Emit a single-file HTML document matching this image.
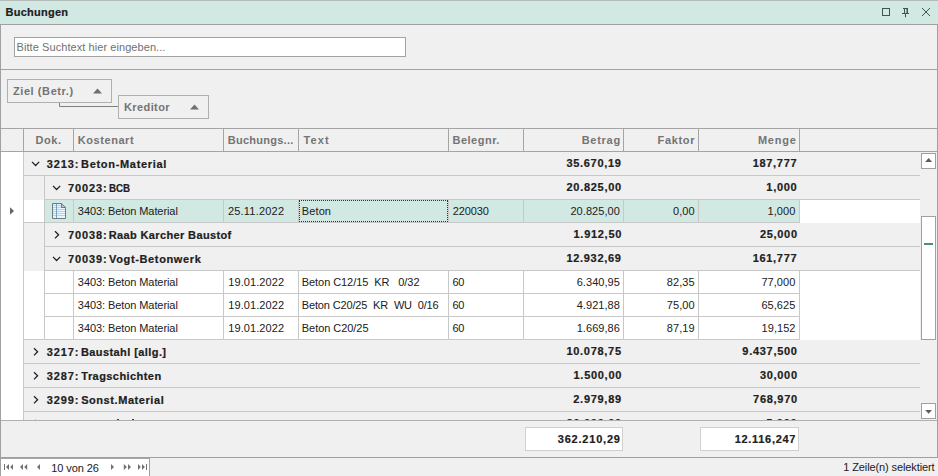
<!DOCTYPE html>
<html>
<head>
<meta charset="utf-8">
<title>Buchungen</title>
<style>
html,body{margin:0;padding:0;}
body{width:938px;height:476px;overflow:hidden;background:#f0f0f0;font-family:"Liberation Sans",sans-serif;font-size:11px;color:#202020;position:relative;}
div{position:absolute;box-sizing:border-box;white-space:nowrap;}
.t{line-height:14px;height:14px;letter-spacing:0.1px;}
.b{font-weight:bold;-webkit-text-stroke:0.2px #202020;}
.r{text-align:right;}
.hd{color:#747474;font-weight:bold;}
.g{color:#707070;}
svg{position:absolute;overflow:visible;}
</style>
</head>
<body>

<div style="left:0px;top:0px;width:938px;height:24px;background:#d2e8e2;"></div>
<div style="left:0px;top:0px;width:938px;height:1px;background:#b4bcba;"></div>
<div style="left:0px;top:24px;width:938px;height:1px;background:#a0a0a0;"></div>
<svg style="left:0;top:0" width="938" height="25">
 <rect x="882.5" y="8.5" width="7" height="7" fill="none" stroke="#45524f" stroke-width="1"/>
 <path d="M903 8.500H908M904.500 8.500V13M902 13.500H909M905.500 14V17.300" fill="none" stroke="#45524f" stroke-width="1"/><path d="M907.200 8.500V13" fill="none" stroke="#45524f" stroke-width="1.500"/>
 <path d="M922 8L930 16M930 8L922 16" fill="none" stroke="#45524f" stroke-width="1"/>
</svg>
<div style="left:0px;top:25px;width:1px;height:451px;background:#a0a0a0;"></div>
<div style="left:937px;top:25px;width:1px;height:433px;background:#a0a0a0;"></div>
<div style="left:14px;top:37px;width:392px;height:20px;background:#fff;border:1px solid #a2a2a2;"></div>
<div style="left:1px;top:69px;width:936px;height:1px;background:#a2a2a2;"></div>
<div style="left:7px;top:79px;width:105px;height:24px;background:transparent;border:1px solid #b0b0b0;"></div>
<div style="left:118px;top:95px;width:91px;height:24px;background:transparent;border:1px solid #b0b0b0;"></div>
<svg style="left:0;top:70px" width="300" height="58">
 <path d="M59.5 33V36.5H118" fill="none" stroke="#808080" stroke-width="1"/>
 <path d="M93 23.5L97.5 18.5L102 23.5Z" fill="#707070"/>
 <path d="M190 39.5L194.5 34.5L199 39.5Z" fill="#707070"/>
</svg>
<div style="left:1px;top:128px;width:936px;height:1px;background:#a4a4a4;"></div>
<div style="left:1px;top:151px;width:936px;height:1px;background:#a4a4a4;"></div>
<div style="left:23px;top:129px;width:1px;height:22px;background:#a4a4a4;"></div>
<div style="left:73px;top:129px;width:1px;height:22px;background:#a4a4a4;"></div>
<div style="left:223px;top:129px;width:1px;height:22px;background:#a4a4a4;"></div>
<div style="left:298px;top:129px;width:1px;height:22px;background:#a4a4a4;"></div>
<div style="left:448px;top:129px;width:1px;height:22px;background:#a4a4a4;"></div>
<div style="left:523px;top:129px;width:1px;height:22px;background:#a4a4a4;"></div>
<div style="left:623px;top:129px;width:1px;height:22px;background:#a4a4a4;"></div>
<div style="left:698px;top:129px;width:1px;height:22px;background:#a4a4a4;"></div>
<div style="left:799px;top:129px;width:1px;height:22px;background:#a4a4a4;"></div>
<div style="left:1px;top:152px;width:22px;height:268px;background:#fff;"></div>
<div style="left:23px;top:152px;width:1px;height:268px;background:#c8c8c8;"></div>
<div style="left:24px;top:175px;width:896px;height:1px;background:#c8c8c8;"></div>
<svg style="left:0;top:0" width="938" height="476"><path d="M32.0 161.9L35.6 165.5L39.2 161.9" fill="none" stroke="#222222" stroke-width="1.3"/></svg>
<div style="left:44px;top:176px;width:1px;height:24px;background:#c8c8c8;"></div>
<div style="left:45px;top:199px;width:875px;height:1px;background:#c8c8c8;"></div>
<svg style="left:0;top:0" width="938" height="476"><path d="M53.0 185.9L56.6 189.5L60.2 185.9" fill="none" stroke="#222222" stroke-width="1.3"/></svg>
<div style="left:24px;top:200px;width:896px;height:23px;background:#fff;"></div>
<div style="left:44px;top:200px;width:1px;height:23px;background:#c8c8c8;"></div>
<div style="left:45px;top:200px;width:754px;height:22px;background:#d2e8e2;"></div>
<div style="left:24px;top:222px;width:776px;height:1px;background:#c8c8c8;"></div>
<div style="left:73px;top:200px;width:1px;height:23px;background:#c8c8c8;"></div>
<div style="left:223px;top:200px;width:1px;height:23px;background:#c8c8c8;"></div>
<div style="left:298px;top:200px;width:1px;height:23px;background:#c8c8c8;"></div>
<div style="left:448px;top:200px;width:1px;height:23px;background:#c8c8c8;"></div>
<div style="left:523px;top:200px;width:1px;height:23px;background:#c8c8c8;"></div>
<div style="left:623px;top:200px;width:1px;height:23px;background:#c8c8c8;"></div>
<div style="left:698px;top:200px;width:1px;height:23px;background:#c8c8c8;"></div>
<div style="left:799px;top:200px;width:1px;height:23px;background:#c8c8c8;"></div>
<div style="left:44px;top:223px;width:1px;height:24px;background:#c8c8c8;"></div>
<div style="left:45px;top:246px;width:875px;height:1px;background:#c8c8c8;"></div>
<svg style="left:0;top:0" width="938" height="476"><path d="M55.0 231.20000000000002L58.6 234.8L55.0 238.4" fill="none" stroke="#222222" stroke-width="1.3"/></svg>
<div style="left:44px;top:247px;width:1px;height:24px;background:#c8c8c8;"></div>
<div style="left:45px;top:270px;width:875px;height:1px;background:#c8c8c8;"></div>
<svg style="left:0;top:0" width="938" height="476"><path d="M53.0 256.90000000000003L56.6 260.5L60.2 256.90000000000003" fill="none" stroke="#222222" stroke-width="1.3"/></svg>
<div style="left:24px;top:271px;width:896px;height:23px;background:#fff;"></div>
<div style="left:44px;top:271px;width:1px;height:23px;background:#c8c8c8;"></div>
<div style="left:45px;top:293px;width:755px;height:1px;background:#c8c8c8;"></div>
<div style="left:73px;top:271px;width:1px;height:23px;background:#c8c8c8;"></div>
<div style="left:223px;top:271px;width:1px;height:23px;background:#c8c8c8;"></div>
<div style="left:298px;top:271px;width:1px;height:23px;background:#c8c8c8;"></div>
<div style="left:448px;top:271px;width:1px;height:23px;background:#c8c8c8;"></div>
<div style="left:523px;top:271px;width:1px;height:23px;background:#c8c8c8;"></div>
<div style="left:623px;top:271px;width:1px;height:23px;background:#c8c8c8;"></div>
<div style="left:698px;top:271px;width:1px;height:23px;background:#c8c8c8;"></div>
<div style="left:799px;top:271px;width:1px;height:23px;background:#c8c8c8;"></div>
<div style="left:24px;top:294px;width:896px;height:23px;background:#fff;"></div>
<div style="left:44px;top:294px;width:1px;height:23px;background:#c8c8c8;"></div>
<div style="left:45px;top:316px;width:755px;height:1px;background:#c8c8c8;"></div>
<div style="left:73px;top:294px;width:1px;height:23px;background:#c8c8c8;"></div>
<div style="left:223px;top:294px;width:1px;height:23px;background:#c8c8c8;"></div>
<div style="left:298px;top:294px;width:1px;height:23px;background:#c8c8c8;"></div>
<div style="left:448px;top:294px;width:1px;height:23px;background:#c8c8c8;"></div>
<div style="left:523px;top:294px;width:1px;height:23px;background:#c8c8c8;"></div>
<div style="left:623px;top:294px;width:1px;height:23px;background:#c8c8c8;"></div>
<div style="left:698px;top:294px;width:1px;height:23px;background:#c8c8c8;"></div>
<div style="left:799px;top:294px;width:1px;height:23px;background:#c8c8c8;"></div>
<div style="left:24px;top:317px;width:896px;height:23px;background:#fff;"></div>
<div style="left:44px;top:317px;width:1px;height:23px;background:#c8c8c8;"></div>
<div style="left:24px;top:339px;width:776px;height:1px;background:#c8c8c8;"></div>
<div style="left:73px;top:317px;width:1px;height:23px;background:#c8c8c8;"></div>
<div style="left:223px;top:317px;width:1px;height:23px;background:#c8c8c8;"></div>
<div style="left:298px;top:317px;width:1px;height:23px;background:#c8c8c8;"></div>
<div style="left:448px;top:317px;width:1px;height:23px;background:#c8c8c8;"></div>
<div style="left:523px;top:317px;width:1px;height:23px;background:#c8c8c8;"></div>
<div style="left:623px;top:317px;width:1px;height:23px;background:#c8c8c8;"></div>
<div style="left:698px;top:317px;width:1px;height:23px;background:#c8c8c8;"></div>
<div style="left:799px;top:317px;width:1px;height:23px;background:#c8c8c8;"></div>
<div style="left:24px;top:363px;width:896px;height:1px;background:#c8c8c8;"></div>
<svg style="left:0;top:0" width="938" height="476"><path d="M34.0 348.2L37.6 351.8L34.0 355.40000000000003" fill="none" stroke="#222222" stroke-width="1.3"/></svg>
<div style="left:24px;top:387px;width:896px;height:1px;background:#c8c8c8;"></div>
<svg style="left:0;top:0" width="938" height="476"><path d="M34.0 372.2L37.6 375.8L34.0 379.40000000000003" fill="none" stroke="#222222" stroke-width="1.3"/></svg>
<div style="left:24px;top:411px;width:896px;height:1px;background:#c8c8c8;"></div>
<svg style="left:0;top:0" width="938" height="476"><path d="M34.0 396.2L37.6 399.8L34.0 403.40000000000003" fill="none" stroke="#222222" stroke-width="1.3"/></svg>
<div style="left:24px;top:412px;width:896px;height:8px;overflow:hidden;">
<div class="t b" style="left:542.59px;top:4px;letter-spacing:0.71px;">80.000,00</div>
<div class="t b" style="left:742.24px;top:4px;letter-spacing:0.71px;">5,000</div>
</div>
<div style="left:116.5px;top:419px;width:2px;height:1px;background:#3a3a3a;"></div>
<div style="left:132px;top:419px;width:2px;height:1px;background:#3a3a3a;"></div>
<div style="left:35px;top:419px;width:1px;height:1px;background:#c0c0c0;"></div>
<div style="left:299px;top:200px;width:149px;height:22px;border:1px dotted #303030;"></div>
<svg style="left:0;top:0" width="938" height="476">
 <path d="M10 207.200L14 211L10 214.800Z" fill="#666666"/>
 <path d="M52.5 203.5H61.5L65.5 207.5V218.5H52.5Z" fill="#eaf4fc" stroke="#6f7b7d" stroke-width="1"/>
 <path d="M53 207H65V208H53ZM53 209H65V210H53ZM53 211H65V212H53ZM53 213H65V214H53ZM53 215H65V216H53ZM53 205H61V206H53Z" fill="#b0d5f3"/>
 <rect x="56" y="204" width="1" height="14" fill="#6fa3d3"/>
 <path d="M61.5 203.5V207.5H65.5Z" fill="#c4ced2" stroke="#6f7b7d" stroke-width="1" stroke-linejoin="round"/>
</svg>
<div style="left:921px;top:153px;width:15px;height:16px;background:#fff;border:1px solid #a0a0a0;"></div>
<div style="left:921px;top:216px;width:15px;height:124px;background:#fff;border:1px solid #a0a0a0;"></div>
<div style="left:921px;top:403px;width:15px;height:16px;background:#fff;border:1px solid #a0a0a0;"></div>
<div style="left:924px;top:243px;width:9px;height:2px;background:#4f8f63;"></div>
<svg style="left:0;top:0" width="938" height="476">
 <path d="M925.1 161.9L928.6 158L932.1 161.9Z" fill="#5c5c5c"/>
 <path d="M925.2 410.1L928.6 413.8L932 410.1Z" fill="#5c5c5c"/>
</svg>
<div style="left:1px;top:420px;width:936px;height:38px;background:#f0f0f0;"></div>
<div style="left:1px;top:420px;width:936px;height:1px;background:#b0b0b0;"></div>
<div style="left:1px;top:457px;width:936px;height:1px;background:#a0a0a0;"></div>
<div style="left:525px;top:427px;width:98px;height:24px;background:#fff;border:1px solid #d0d0d0;"></div>
<div style="left:700px;top:427px;width:99px;height:24px;background:#fff;border:1px solid #d0d0d0;"></div>
<div style="left:1px;top:458px;width:148px;height:18px;background:#fff;"></div>
<div style="left:149px;top:458px;width:1px;height:18px;background:#a0a0a0;"></div>
<div style="left:1px;top:458px;width:148px;height:1px;background:#a6a6a6;"></div>
<svg style="left:0;top:0" width="938" height="476" fill="#707070">
 <rect x="4" y="464" width="1" height="6"/><path d="M9 464V470L6 467Z"/><path d="M13 464V470L10.200 467Z"/>
 <path d="M23 464V470L20 467Z"/><path d="M27.200 464V470L24.200 467Z"/>
 <path d="M40 464V470L37 467Z"/>
 <path d="M111 464V470L114 467Z"/>
 <path d="M123.800 464V470L126.800 467Z"/><path d="M128 464V470L131 467Z"/>
 <path d="M138 464V470L140.800 467Z"/><path d="M142 464V470L144.800 467Z"/><rect x="146" y="464" width="1" height="6"/>
</svg>
<div class="t b" style="left:5.56px;top:5px;letter-spacing:0.24px;">Buchungen</div>
<div class="t g" style="left:16.55px;top:40px;letter-spacing:0.07px;">Bitte Suchtext hier eingeben...</div>
<div class="t hd" style="left:12.96px;top:84px;letter-spacing:0.58px;">Ziel (Betr.)</div>
<div class="t hd" style="left:123.90px;top:100px;letter-spacing:0.42px;">Kreditor</div>
<div class="t hd" style="left:35.53px;top:133px;letter-spacing:0.59px;">Dok.</div>
<div class="t hd" style="left:77.73px;top:133px;letter-spacing:0.57px;">Kostenart</div>
<div class="t hd" style="left:227.72px;top:133px;letter-spacing:0.26px;">Buchungs...</div>
<div class="t hd" style="left:303.53px;top:133px;letter-spacing:1.11px;">Text</div>
<div class="t hd" style="left:452.53px;top:133px;letter-spacing:0.49px;">Belegnr.</div>
<div class="t hd" style="left:581.73px;top:133px;letter-spacing:0.71px;">Betrag</div>
<div class="t hd" style="left:657.57px;top:133px;letter-spacing:0.67px;">Faktor</div>
<div class="t hd" style="left:757.90px;top:133px;letter-spacing:0.80px;">Menge</div>
<div class="t b" style="left:46.75px;top:157px;letter-spacing:0.87px;">3213:</div>
<div class="t b" style="left:81.10px;top:157px;letter-spacing:0.68px;">Beton-Material</div>
<div class="t b" style="left:566.38px;top:156px;letter-spacing:0.71px;">35.670,19</div>
<div class="t b" style="left:752.64px;top:156px;letter-spacing:0.71px;">187,777</div>
<div class="t b" style="left:67.94px;top:181px;letter-spacing:0.87px;">70023:</div>
<div class="t b" style="left:108.7px;top:181px;letter-spacing:0;transform:scaleX(0.886);transform-origin:0 0;">BCB</div>
<div class="t b" style="left:566.55px;top:180px;letter-spacing:0.71px;">20.825,00</div>
<div class="t b" style="left:766.32px;top:180px;letter-spacing:0.71px;">1,000</div>
<div class="t b" style="left:67.94px;top:228px;letter-spacing:0.87px;">70038:</div>
<div class="t b" style="left:108.73px;top:228px;letter-spacing:0.37px;">Raab Karcher Baustof</div>
<div class="t b" style="left:573.55px;top:227px;letter-spacing:0.71px;">1.912,50</div>
<div class="t b" style="left:759.89px;top:227px;letter-spacing:0.71px;">25,000</div>
<div class="t b" style="left:67.94px;top:252px;letter-spacing:0.87px;">70039:</div>
<div class="t b" style="left:109.11px;top:252px;letter-spacing:0.63px;">Vogt-Betonwerk</div>
<div class="t b" style="left:566.38px;top:251px;letter-spacing:0.71px;">12.932,69</div>
<div class="t b" style="left:752.64px;top:251px;letter-spacing:0.71px;">161,777</div>
<div class="t b" style="left:46.75px;top:345px;letter-spacing:0.87px;">3217:</div>
<div class="t b" style="left:80.90px;top:345px;letter-spacing:0.42px;">Baustahl [allg.]</div>
<div class="t b" style="left:566.43px;top:344px;letter-spacing:0.71px;">10.078,75</div>
<div class="t b" style="left:742.32px;top:344px;letter-spacing:0.71px;">9.437,500</div>
<div class="t b" style="left:46.75px;top:369px;letter-spacing:0.87px;">3287:</div>
<div class="t b" style="left:81.36px;top:369px;letter-spacing:0.43px;">Tragschichten</div>
<div class="t b" style="left:573.55px;top:368px;letter-spacing:0.71px;">1.500,00</div>
<div class="t b" style="left:759.89px;top:368px;letter-spacing:0.71px;">30,000</div>
<div class="t b" style="left:46.75px;top:393px;letter-spacing:0.87px;">3299:</div>
<div class="t b" style="left:81.13px;top:393px;letter-spacing:0.57px;">Sonst.Material</div>
<div class="t b" style="left:573.30px;top:392px;letter-spacing:0.71px;">2.979,89</div>
<div class="t b" style="left:753.09px;top:392px;letter-spacing:0.71px;">768,970</div>
<div class="t" style="left:77.85px;top:204px;letter-spacing:-0.08px;">3403: Beton Material</div>
<div class="t" style="left:227.90px;top:204px;letter-spacing:0.21px;">25.11.2022</div>
<div class="t" style="left:301.80px;top:204px;letter-spacing:0.11px;">Beton</div>
<div class="t" style="left:452.82px;top:204px;letter-spacing:-0.15px;">220030</div>
<div class="t" style="left:570.46px;top:204px;letter-spacing:0.05px;">20.825,00</div>
<div class="t" style="left:672.97px;top:204px;letter-spacing:0.05px;">0,00</div>
<div class="t" style="left:767.56px;top:204px;letter-spacing:0.05px;">1,000</div>
<div class="t" style="left:77.85px;top:275px;letter-spacing:-0.08px;">3403: Beton Material</div>
<div class="t" style="left:228.29px;top:275px;letter-spacing:0.08px;">19.01.2022</div>
<div class="t" style="left:301.80px;top:275px;letter-spacing:-0.07px;">Beton C12/15&nbsp; KR&nbsp; &nbsp;0/32</div>
<div class="t" style="left:452.38px;top:275px;letter-spacing:-0.15px;">60</div>
<div class="t" style="left:576.71px;top:275px;letter-spacing:0.05px;">6.340,95</div>
<div class="t" style="left:666.86px;top:275px;letter-spacing:0.05px;">82,35</div>
<div class="t" style="left:761.40px;top:275px;letter-spacing:0.05px;">77,000</div>
<div class="t" style="left:77.85px;top:298px;letter-spacing:-0.08px;">3403: Beton Material</div>
<div class="t" style="left:228.29px;top:298px;letter-spacing:0.08px;">19.01.2022</div>
<div class="t" style="left:301.80px;top:298px;letter-spacing:-0.15px;">Beton C20/25&nbsp; KR&nbsp; WU&nbsp; 0/16</div>
<div class="t" style="left:452.38px;top:298px;letter-spacing:-0.15px;">60</div>
<div class="t" style="left:576.69px;top:298px;letter-spacing:0.05px;">4.921,88</div>
<div class="t" style="left:666.81px;top:298px;letter-spacing:0.05px;">75,00</div>
<div class="t" style="left:761.40px;top:298px;letter-spacing:0.05px;">65,625</div>
<div class="t" style="left:77.85px;top:321px;letter-spacing:-0.08px;">3403: Beton Material</div>
<div class="t" style="left:228.29px;top:321px;letter-spacing:0.08px;">19.01.2022</div>
<div class="t" style="left:301.80px;top:321px;letter-spacing:-0.05px;">Beton C20/25</div>
<div class="t" style="left:452.38px;top:321px;letter-spacing:-0.15px;">60</div>
<div class="t" style="left:576.69px;top:321px;letter-spacing:0.05px;">1.669,86</div>
<div class="t" style="left:666.85px;top:321px;letter-spacing:0.05px;">87,19</div>
<div class="t" style="left:761.60px;top:321px;letter-spacing:0.05px;">19,152</div>
<div class="t b" style="left:557.81px;top:432px;letter-spacing:0.79px;">362.210,29</div>
<div class="t b" style="left:734.63px;top:432px;letter-spacing:0.71px;">12.116,247</div>
<div class="t" style="left:51.29px;top:461px;letter-spacing:-0.10px;">10 von 26</div>
<div class="t" style="left:843.29px;top:460px;letter-spacing:-0.11px;">1 Zeile(n) selektiert</div>
</body>
</html>
